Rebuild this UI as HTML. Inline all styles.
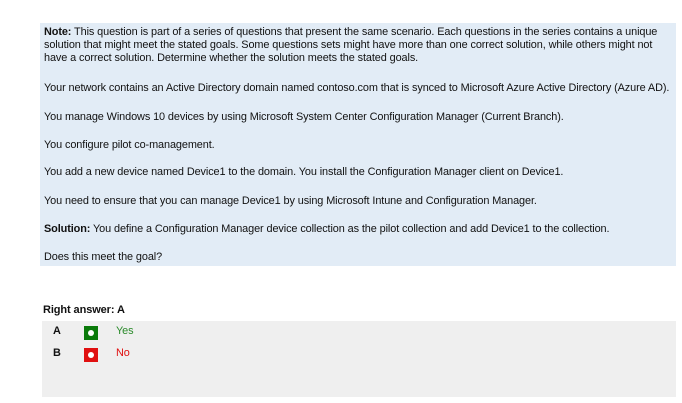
<!DOCTYPE html>
<html><head><style>
body{margin:0;background:#fff;width:682px;height:403px;overflow:hidden;font-family:"Liberation Sans",sans-serif;font-size:10.9px;color:#111;letter-spacing:-0.1px}
.q{position:absolute;left:40px;top:23px;width:636px;height:243px;background:#e2ecf6}
.p{position:absolute;left:44px;width:625px;line-height:13px;white-space:nowrap}
.ra{position:absolute;left:43px;top:304px;font-weight:bold;font-size:11px}
.g{position:absolute;left:42px;top:321px;width:634px;height:76px;background:#efefef}
.opt{position:absolute;font-weight:bold}
.box{position:absolute;width:14px;height:14px;box-sizing:border-box}
.box::after{content:"";position:absolute;left:4px;top:4px;width:6px;height:6px;border-radius:50%;background:#fff}
</style></head><body>
<div class="q"></div>
<div class="p" style="top:26px"><b>Note:</b> This question is part of a series of questions that present the same scenario. Each questions in the series contains a unique<br>solution that might meet the stated goals. Some questions sets might have more than one correct solution, while others might not<br>have a correct solution. Determine whether the solution meets the stated goals.</div>
<div class="p" style="top:82px">Your network contains an Active Directory domain named contoso.com that is synced to Microsoft Azure Active Directory (Azure AD).</div>
<div class="p" style="top:111px">You manage Windows 10 devices by using Microsoft System Center Configuration Manager (Current Branch).</div>
<div class="p" style="top:139px">You configure pilot co-management.</div>
<div class="p" style="top:166px">You add a new device named Device1 to the domain. You install the Configuration Manager client on Device1.</div>
<div class="p" style="top:195px">You need to ensure that you can manage Device1 by using Microsoft Intune and Configuration Manager.</div>
<div class="p" style="top:223px"><b>Solution:</b> You define a Configuration Manager device collection as the pilot collection and add Device1 to the collection.</div>
<div class="p" style="top:251px">Does this meet the goal?</div>
<div class="ra">Right answer: A</div>
<div class="g"></div>
<div class="opt" style="left:53px;top:325px">A</div>
<div class="box" style="left:84px;top:326px;background:#0a7a0a"></div>
<div style="position:absolute;left:116px;top:325px;color:#2a8a2a">Yes</div>
<div class="opt" style="left:53px;top:347px">B</div>
<div class="box" style="left:84px;top:348px;background:#e01010"></div>
<div style="position:absolute;left:116px;top:347px;color:#e01010">No</div>
</body></html>
